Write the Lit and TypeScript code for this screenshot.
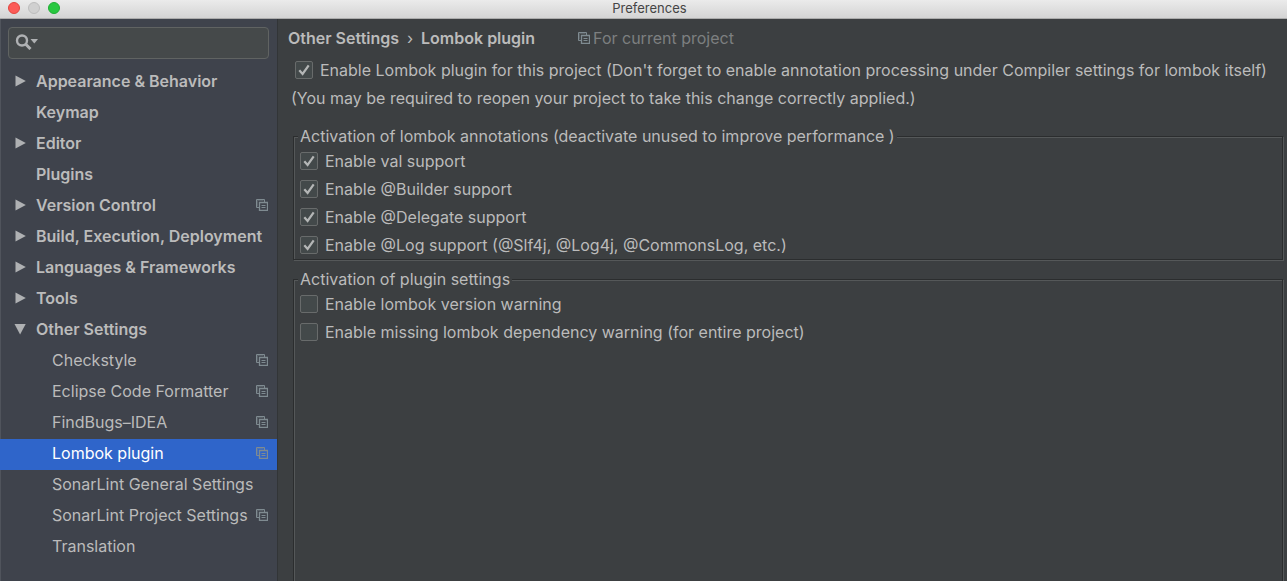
import { LitElement, html, css, svg, nothing } from "lit";
import { customElement, state } from "lit/decorators.js";
import { classMap } from "lit/directives/class-map.js";

interface TreeItem {
  label: string;
  level: 0 | 1;
  arrow?: "closed" | "open";
  project?: boolean;
}

interface Option {
  id: string;
  label: string;
  checked: boolean;
}

const ITEMS: TreeItem[] = [
  { label: "Appearance & Behavior", level: 0, arrow: "closed" },
  { label: "Keymap", level: 0 },
  { label: "Editor", level: 0, arrow: "closed" },
  { label: "Plugins", level: 0 },
  { label: "Version Control", level: 0, arrow: "closed", project: true },
  { label: "Build, Execution, Deployment", level: 0, arrow: "closed" },
  { label: "Languages & Frameworks", level: 0, arrow: "closed" },
  { label: "Tools", level: 0, arrow: "closed" },
  { label: "Other Settings", level: 0, arrow: "open" },
  { label: "Checkstyle", level: 1, project: true },
  { label: "Eclipse Code Formatter", level: 1, project: true },
  { label: "FindBugs–IDEA", level: 1, project: true },
  { label: "Lombok plugin", level: 1, project: true },
  { label: "SonarLint General Settings", level: 1 },
  { label: "SonarLint Project Settings", level: 1, project: true },
  { label: "Translation", level: 1 },
];

const ANNOTATIONS: Option[] = [
  { id: "val", label: "Enable val support", checked: true },
  { id: "builder", label: "Enable @Builder support", checked: true },
  { id: "delegate", label: "Enable @Delegate support", checked: true },
  { id: "log", label: "Enable @Log support (@Slf4j, @Log4j, @CommonsLog, etc.)", checked: true },
];

const SETTINGS: Option[] = [
  { id: "version", label: "Enable lombok version warning", checked: false },
  { id: "dependency", label: "Enable missing lombok dependency warning (for entire project)", checked: false },
];

const projectIcon = html`<svg class="project" width="12" height="12" viewBox="0 0 12 12" aria-hidden="true">
  <path d="M3 8.5H.5v-8h8V3" fill="none" stroke="currentColor" />
  <path d="M1.5 7.5v-6h6" fill="none" stroke="currentColor" opacity="0.4" />
  <path d="M3.5 3.5h8v8h-8z" fill="none" stroke="currentColor" stroke-width="1.3" />
  <path d="M5.5 6.5h4M5.5 8.5h4" stroke="currentColor" stroke-width="1.2" />
</svg>`;

const arrowIcon = (kind: "closed" | "open") => html`<svg width="12" height="12" viewBox="0 0 12 12" aria-hidden="true">
  ${kind === "closed"
    ? svg`<path d="M1.5 0.5L11.8 6L1.5 11.5z" fill="currentColor" />`
    : svg`<path d="M0.5 1H11.7L6.1 11.5z" fill="currentColor" />`}
</svg>`;

@customElement("settings-check")
export class SettingsCheck extends LitElement {
  static properties = {
    name: { type: String },
    label: { type: String },
    checked: { type: Boolean },
  };
  declare name: string;
  declare label: string;
  declare checked: boolean;

  static styles = css`
    :host {
      display: block;
    }
    .row {
      display: flex;
      align-items: center;
      gap: 7px;
      height: 28px;
    }
    .box {
      display: grid;
      flex: none;
      width: 18px;
      height: 18px;
    }
    .box > * {
      grid-area: 1 / 1;
    }
    input {
      appearance: none;
      box-sizing: border-box;
      width: 18px;
      height: 18px;
      margin: 0;
      border: 1px solid #686b6b;
      border-radius: 2px;
      background: #43494a;
    }
    svg {
      pointer-events: none;
    }
    label {
      white-space: nowrap;
    }
  `;

  private toggle(e: Event) {
    this.checked = (e.target as HTMLInputElement).checked;
  }

  render() {
    return html`<div class="row">
      <span class="box">
        <input id=${this.name} type="checkbox" .checked=${this.checked} @change=${this.toggle} />
        ${this.checked
          ? html`<svg width="18" height="18" viewBox="0 0 18 18" aria-hidden="true">
              <path d="M4.3 9.2L7.6 13L13.7 4.3" fill="none" stroke="#b4b6b6" stroke-width="2.2" />
            </svg>`
          : nothing}
      </span>
      <label for=${this.name}>${this.label}</label>
    </div>`;
  }
}

@customElement("app-root")
export class AppRoot extends LitElement {
  @state() private selected = "Lombok plugin";

  static styles = css`
    :host {
      display: flex;
      flex-direction: column;
      min-height: 100vh;
      background: #3c3f41;
      color: #bbbbbb;
      font: 16px/20px Inter, "Liberation Sans", sans-serif;
    }
    .titlebar {
      display: grid;
      grid-template-columns: 1fr auto 1fr;
      align-items: center;
      box-sizing: border-box;
      height: 19px;
      padding: 0 0 2px 8px;
      border-bottom: 1px solid #acacac;
      background: linear-gradient(#ebebeb, #d4d4d4);
      color: #454545;
    }
    .title {
      margin: 0;
      padding-left: 4px;
      font-size: 13px;
      line-height: 16px;
      font-weight: 400;
    }
    .lights {
      display: flex;
      gap: 8px;
    }
    .light {
      box-sizing: border-box;
      width: 12px;
      height: 12px;
      padding: 0;
      border: 1px solid #e2463f;
      border-radius: 50%;
      background: #fc5b57;
    }
    .light.min {
      border-color: #bdbdbd;
      background: #d0d0d0;
    }
    .light.max {
      border-color: #1fae34;
      background: #28c840;
    }
    .body {
      display: flex;
      flex: 1;
    }
    .sidebar {
      display: flex;
      flex-direction: column;
      flex: none;
      box-sizing: border-box;
      width: 278px;
      border-right: 1px solid #323537;
      background: #3f434c;
      box-shadow: inset 1px 0 #50545c;
    }
    .search {
      display: flex;
      align-items: center;
      box-sizing: border-box;
      height: 32px;
      margin: 8px;
      padding: 0 6px 2px;
      border: 1px solid #606362;
      border-radius: 4px;
      background: #45494a;
    }
    .search svg {
      flex: none;
    }
    .search input {
      flex: 1;
      min-width: 0;
      border: 0;
      outline: 0;
      background: none;
      color: inherit;
      font: inherit;
    }
    .tree {
      margin: 0;
      padding: 0;
      list-style: none;
    }
    .item {
      display: flex;
      align-items: center;
      box-sizing: border-box;
      width: 100%;
      height: 31px;
      padding: 0 9px 3px 14px;
      border: 0;
      background: none;
      color: inherit;
      font: inherit;
      font-weight: 600;
      text-align: left;
      white-space: nowrap;
    }
    .item.child {
      padding-left: 30px;
      font-weight: 400;
    }
    .item.selected {
      background: #2f65ca;
      color: #ffffff;
    }
    .twisty {
      display: flex;
      flex: none;
      width: 22px;
      color: #afb1b3;
    }
    .name {
      flex: 1;
    }
    .project {
      flex: none;
      color: #7f8b91;
    }
    .content {
      display: flex;
      flex-direction: column;
      flex: 1;
      min-width: 0;
      padding: 7px 3px 0 10px;
    }
    .crumbs {
      display: flex;
      align-items: center;
      height: 24px;
      white-space: nowrap;
    }
    .crumb {
      margin: 0;
      font-size: 16px;
      font-weight: 600;
    }
    .sep {
      width: 22px;
      text-align: center;
    }
    .scope {
      display: flex;
      align-items: center;
      gap: 3px;
      margin-left: 43px;
      color: #7d7f80;
    }
    .main {
      margin: 6px 0 0 7px;
    }
    .note {
      margin: 4px 0 18px 3px;
      white-space: nowrap;
    }
    fieldset {
      min-width: 0;
      margin: 0 1px 9px 5px;
      padding: 1px 0 0 4px;
      border: 1px solid #2b2d2e;
      box-shadow: 1px 1px #555859, inset 1px 1px #555859;
    }
    fieldset settings-check {
      margin-left: 2px;
    }
    fieldset.last {
      flex: 1;
      margin-bottom: 0;
      border-bottom: 0;
    }
    legend {
      padding: 0 2px;
      background: #3c3f41;
    }
  `;

  private options(list: Option[]) {
    return list.map(
      (o) => html`<settings-check name=${o.id} label=${o.label} ?checked=${o.checked}></settings-check>`
    );
  }

  render() {
    return html`
      <header class="titlebar">
        <div class="lights">
          <button class="light" aria-label="Close"></button>
          <button class="light min" aria-label="Minimize"></button>
          <button class="light max" aria-label="Zoom"></button>
        </div>
        <h1 class="title">Preferences</h1>
      </header>
      <div class="body">
        <nav class="sidebar">
          <div class="search">
            <svg width="23" height="16" viewBox="0 0 23 16" aria-hidden="true">
              <circle cx="7" cy="6.5" r="5" fill="none" stroke="#afb1b3" stroke-width="2.4" />
              <path d="M10.5 10L15.5 15" stroke="#afb1b3" stroke-width="3" />
              <path d="M15.5 5H23l-3.7 4.5z" fill="#afb1b3" />
            </svg>
            <input type="text" aria-label="Search settings" />
          </div>
          <ul class="tree">
            ${ITEMS.map(
              (item) => html`<li>
                <button
                  class=${classMap({
                    item: true,
                    child: item.level === 1,
                    selected: item.label === this.selected,
                  })}
                  @click=${() => (this.selected = item.label)}
                >
                  <span class="twisty">${item.arrow ? arrowIcon(item.arrow) : nothing}</span>
                  <span class="name">${item.label}</span>
                  ${item.project ? projectIcon : nothing}
                </button>
              </li>`
            )}
          </ul>
        </nav>
        <main class="content">
          <div class="crumbs">
            <span class="crumb">Other Settings</span>
            <span class="sep">›</span>
            <h2 class="crumb">Lombok plugin</h2>
            <span class="scope">${projectIcon}<span>For current project</span></span>
          </div>
          <settings-check
            class="main"
            name="enable"
            label="Enable Lombok plugin for this project (Don't forget to enable annotation processing under Compiler settings for lombok itself)"
            checked
          ></settings-check>
          <p class="note">(You may be required to reopen your project to take this change correctly applied.)</p>
          <fieldset>
            <legend>Activation of lombok annotations (deactivate unused to improve performance )</legend>
            ${this.options(ANNOTATIONS)}
          </fieldset>
          <fieldset class="last">
            <legend>Activation of plugin settings</legend>
            ${this.options(SETTINGS)}
          </fieldset>
        </main>
      </div>
    `;
  }
}
